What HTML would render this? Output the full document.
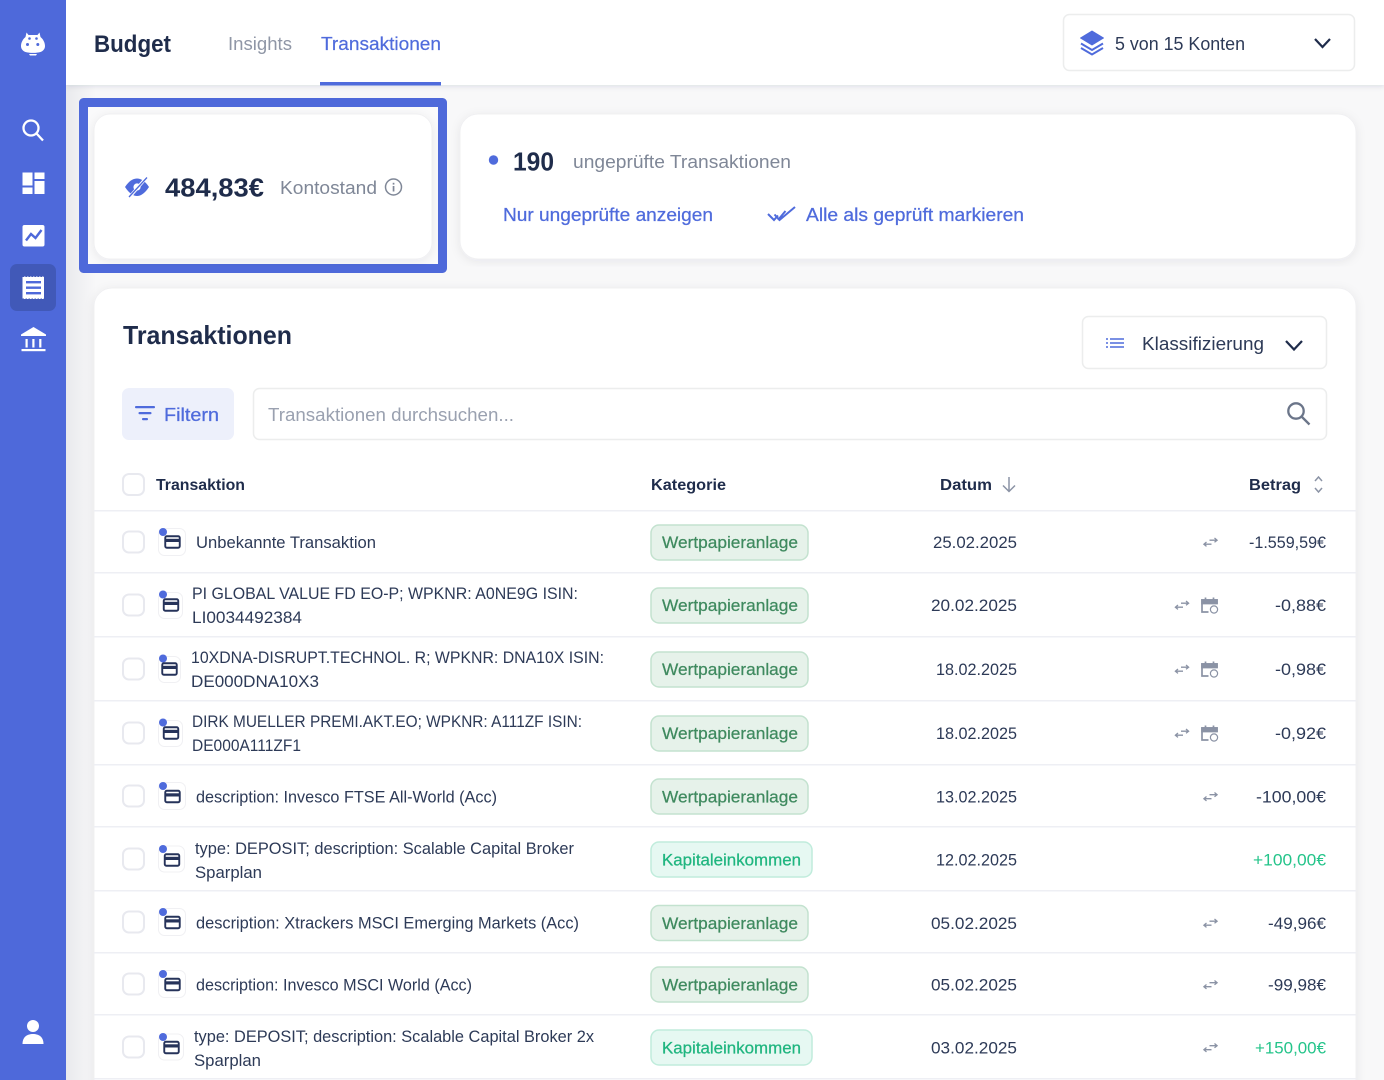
<!DOCTYPE html>
<html lang="de">
<head>
<meta charset="utf-8">
<title>Budget</title>
<style>
html,body{margin:0;padding:0;width:1384px;height:1080px;overflow:hidden;background:#f8f8f9}
svg{display:block}
text{font-family:"Liberation Sans",sans-serif;fill:#26334f;font-size:16.5px}
.m{fill:#7f8797;font-size:18px}
.b{fill:#4f6bdc;font-size:18px}
.h{font-weight:700;font-size:16px;fill:#1f2c4b}
.d{font-size:17px;fill:#2d3a57}
.w{fill:#3f8a5f;font-size:17px;stroke:#3f8a5f;stroke-width:.25}
.k{fill:#1fb57f;font-size:17px;stroke:#1fb57f;stroke-width:.25}
.g{fill:#24c48a;font-size:17px}
</style>
</head>
<body>
<svg width="1384" height="1080" viewBox="0 0 1384 1080" xmlns="http://www.w3.org/2000/svg">
<defs>
<filter id="s" x="-5%" y="-5%" width="110%" height="110%"><feDropShadow dx="0" dy="2" stdDeviation="5" flood-color="#1f2c4b" flood-opacity=".07"/></filter>
<filter id="sh" x="-2%" y="-20%" width="104%" height="140%"><feDropShadow dx="0" dy="1" stdDeviation="3" flood-color="#1f2c4b" flood-opacity=".13"/></filter>
<linearGradient id="sg" x1="0" x2="1" y1="0" y2="0"><stop offset="0" stop-color="#1f2c4b" stop-opacity=".07"/><stop offset="1" stop-color="#1f2c4b" stop-opacity="0"/></linearGradient>
<g id="card"><rect x="-7.25" y="-5.75" width="14.5" height="11.5" rx="1.6" fill="none" stroke="#26335a" stroke-width="1.9"/><rect x="-7" y="-3.2" width="14" height="3.2" fill="#26335a"/></g>
<g id="tr" fill="none" stroke="#8b93a5" stroke-width="1.3"><path d="M-1 -1.8H6.5M4 -4L6.6 -1.8L4 .3"/><path d="M1 2.2H-6.5M-4 0L-6.6 2.2L-4 4.4"/></g>
<g id="cal" fill="none" stroke="#8b93a5" stroke-width="1.7"><path d="M-1 7H-7.5V-5H7.5V-1"/><path d="M-7.5 -5H7.5V-1.5H-7.5Z" fill="#8b93a5"/><path d="M-4 -7.5V-5M4 -7.5V-5"/><circle cx="4.5" cy="4.5" r="3.6" stroke-width="1.2"/></g>
<g id="cb"><rect x="1" y="1" width="21" height="21" rx="6" fill="#fff" stroke="#e8e9ef" stroke-width="2"/></g>
<rect id="pillw" width="157" height="35" rx="8" fill="#e6f2ea" stroke="#c3e2cf" stroke-width="1.5"/>
<rect id="pillk" width="161" height="35" rx="8" fill="#e6f8f2" stroke="#c0ecdc" stroke-width="1.5"/>
</defs>

<!-- background -->
<rect width="1384" height="1080" fill="#f8f8f9"/>
<rect x="66" y="0" width="30" height="1080" fill="url(#sg)"/>

<!-- header -->
<rect x="66" y="0" width="1318" height="85" fill="#fff" filter="url(#sh)"/>
<text x="94" y="52" textLength="77" lengthAdjust="spacingAndGlyphs" style="font-size:24px;font-weight:700;fill:#1f2c4b">Budget</text>
<text x="228" y="50" class="m" textLength="64" lengthAdjust="spacingAndGlyphs" style="fill:#8f96a6">Insights</text>
<text x="321" y="50" class="b" textLength="120" lengthAdjust="spacingAndGlyphs" style="stroke:#4f6bdc;stroke-width:.2">Transaktionen</text>
<rect x="320" y="82" width="121" height="3.5" fill="#4f6bdc"/>

<rect x="1063.5" y="14.5" width="291" height="56" rx="6" fill="#fff" stroke="#eceded" stroke-width="1.5"/>
<path d="M1092 31L1103.500 38L1092 45L1080.500 38Z" fill="#4f6bdc" stroke="#4f6bdc" stroke-linejoin="round"/>
<path d="M1081 43.500L1092 50L1103 43.500M1081 48L1092 54.500L1103 48" fill="none" stroke="#4f6bdc" stroke-width="2"/>
<text x="1115" y="50" class="d" style="font-size:18px" textLength="130" lengthAdjust="spacingAndGlyphs">5 von 15 Konten</text>
<path d="M1315 39L1322.500 47L1330 39" fill="none" stroke="#1f2c4b" stroke-width="2.200"/>

<!-- sidebar -->
<rect x="0" y="0" width="66" height="1080" fill="#4e69da"/>
<path d="M26.500 32.500L28.500 35H37.500L39.500 32.500L40.500 37C43 39 45 42.500 45 46C45 49 43 51 40.500 52C37 53.200 29 53.200 25.500 52C23 51 21 49 21 46C21 42.500 23 39 25.500 37Z" fill="#fff"/>
<circle cx="29.500" cy="38.500" r="1.300" fill="#4e69da"/><circle cx="36.500" cy="38.500" r="1.300" fill="#4e69da"/>
<circle cx="27.500" cy="44.500" r="1.500" fill="#4e69da"/><circle cx="37.800" cy="44.500" r="1.500" fill="#4e69da"/>
<path d="M29 54H37L36 55.500H30Z" fill="#fff"/>
<g fill="none" stroke="#fff" stroke-width="2.300"><circle cx="31" cy="128" r="7.500"/><path d="M36.500 133.500L43 140.500"/></g>
<g fill="#fff"><rect x="22.500" y="172.500" width="10" height="13"/><rect x="22.500" y="187.500" width="10" height="6.500"/><rect x="34.500" y="172.500" width="10" height="6.500"/><rect x="34.500" y="181" width="10" height="13"/></g>
<rect x="22.500" y="225" width="22" height="21.500" rx="2" fill="#fff"/>
<path d="M26 240.500L31 234L35.500 238L41.500 230" fill="none" stroke="#4e69da" stroke-width="2.400"/>
<rect x="10" y="264" width="46" height="47" rx="7" fill="#4159b8"/>
<path d="M22.500 276.500h21.500v22.500h-21.500z" fill="#fff"/>
<path d="M22.500 276.500H44M22.500 299H44" stroke="#4159b8" stroke-width="1" stroke-dasharray="1.500 1.500"/>
<g fill="#4e69da"><rect x="26" y="281" width="15" height="2.400"/><rect x="26" y="286.500" width="15" height="2.400"/><rect x="26" y="292" width="15" height="2.400"/></g>
<path d="M33.500 327L46 334.500V336H21V334.500Z" fill="#fff"/>
<g fill="#fff"><rect x="25.500" y="339" width="2.200" height="8.500"/><rect x="32.300" y="339" width="2.200" height="8.500"/><rect x="39.200" y="339" width="2.200" height="8.500"/><rect x="21.500" y="349" width="24" height="2.200"/></g>
<circle cx="33" cy="1026" r="6" fill="#fff"/>
<path d="M22.500 1044C22.500 1037 27 1034 33 1034C39 1034 43.500 1037 43.500 1044Z" fill="#fff"/>

<!-- highlighted balance -->
<rect x="83.500" y="102.500" width="359" height="166" fill="#fafafb" stroke="#4e69da" stroke-width="9" stroke-linejoin="round"/>
<rect x="94" y="114" width="338" height="145" rx="16" fill="#fff" stroke="#f0f0f2" filter="url(#s)"/>
<path d="M125 187C129 181 133 178.500 137 178.500C141 178.500 145 181 149 187C145 193 141 196 137 196C133 196 129 193 125 187Z" fill="#4f6bdc"/>
<circle cx="137" cy="187" r="3.600" fill="#fff"/>
<path d="M130 196.500L146 178" stroke="#fff" stroke-width="3.200"/>
<path d="M129 197L147 177.500" stroke="#4f6bdc" stroke-width="1.300"/>
<text x="165" y="196.500" textLength="99" lengthAdjust="spacingAndGlyphs" style="font-size:26px;font-weight:700;fill:#1f2c4b">484,83€</text>
<text x="280" y="194" class="m" textLength="97" lengthAdjust="spacingAndGlyphs">Kontostand</text>
<circle cx="393.500" cy="187" r="8" fill="none" stroke="#7f8797" stroke-width="1.500"/>
<rect x="392.700" y="186" width="1.700" height="5.500" fill="#7f8797"/><rect x="392.700" y="182.800" width="1.700" height="1.800" fill="#7f8797"/>

<!-- unchecked card -->
<rect x="460" y="114" width="896" height="145" rx="18" fill="#fff" stroke="#f0f0f2" filter="url(#s)"/>
<circle cx="493.500" cy="160" r="4.700" fill="#4f6bdc"/>
<text x="513" y="170.500" textLength="41" lengthAdjust="spacingAndGlyphs" style="font-size:26px;font-weight:700;fill:#1f2c4b">190</text>
<text x="573" y="168" class="m" textLength="218" lengthAdjust="spacingAndGlyphs">ungeprüfte Transaktionen</text>
<text x="503" y="221" class="b" textLength="210" lengthAdjust="spacingAndGlyphs" style="stroke:#4f6bdc;stroke-width:.25">Nur ungeprüfte anzeigen</text>
<path d="M768 214L774 220L778 215.500M774.500 214.500L779.500 220L795 207M778 220L785.500 211" fill="none" stroke="#4f6bdc" stroke-width="2"/>
<text x="806" y="221" class="b" textLength="218" lengthAdjust="spacingAndGlyphs" style="stroke:#4f6bdc;stroke-width:.25">Alle als geprüft markieren</text>

<!-- table card -->
<path d="M94 1090V306A18 18 0 0 1 112 288H1338A18 18 0 0 1 1356 306V1090Z" fill="#fff" stroke="#f0f0f2" filter="url(#s)"/>
<text x="123" y="344" textLength="169" lengthAdjust="spacingAndGlyphs" style="font-size:26px;font-weight:700;fill:#1f2c4b">Transaktionen</text>

<rect x="1082.500" y="316.500" width="244" height="52" rx="6" fill="#fff" stroke="#eceded" stroke-width="1.500"/>
<g stroke="#4f6bdc" stroke-width="1.600"><path d="M1110 339H1124M1110 343H1124M1110 347H1124"/><path d="M1106 339H1108M1106 343H1108M1106 347H1108"/></g>
<text x="1142" y="350" class="d" style="font-size:18px" textLength="122" lengthAdjust="spacingAndGlyphs">Klassifizierung</text>
<path d="M1286 341L1294 349.500L1302 341" fill="none" stroke="#1f2c4b" stroke-width="2.200"/>

<rect x="122" y="388" width="112" height="52" rx="7" fill="#edf0fb"/>
<g fill="#4f6bdc"><rect x="135" y="406" width="20" height="2.300" rx="1"/><rect x="138.500" y="412" width="13" height="2.300" rx="1"/><rect x="142" y="418" width="6" height="2.300" rx="1"/></g>
<text x="164" y="421" class="b" textLength="55" lengthAdjust="spacingAndGlyphs" style="stroke:#4f6bdc;stroke-width:.25">Filtern</text>
<rect x="253.500" y="388.500" width="1073" height="51" rx="6" fill="#fff" stroke="#eceded" stroke-width="1.500"/>
<text x="268" y="421" class="m" textLength="246" lengthAdjust="spacingAndGlyphs" style="fill:#9aa1b0">Transaktionen durchsuchen...</text>
<g fill="none" stroke="#6b7589" stroke-width="2.300"><circle cx="1296" cy="411" r="7.700"/><path d="M1302 417L1309.500 424.500"/></g>

<!-- table head -->
<use href="#cb" x="122" y="473"/>
<text x="156" y="490" class="h" textLength="89" lengthAdjust="spacingAndGlyphs">Transaktion</text>
<text x="651" y="490" class="h" textLength="75" lengthAdjust="spacingAndGlyphs">Kategorie</text>
<text x="940" y="490" class="h" textLength="52" lengthAdjust="spacingAndGlyphs">Datum</text>
<path d="M1009 477V491M1003 485.500L1009 491.500L1015 485.500" fill="none" stroke="#8b93a5" stroke-width="1.500"/>
<text x="1249" y="490" class="h" textLength="52" lengthAdjust="spacingAndGlyphs">Betrag</text>
<path d="M1315 481L1318.500 477L1322 481M1315 488L1318.500 492L1322 488" fill="none" stroke="#8b93a5" stroke-width="1.500"/>

<!-- separators -->
<g fill="#eeeff4">
<rect x="94" y="510" width="1262" height="1.500"/><rect x="94" y="572" width="1262" height="1.500"/><rect x="94" y="636" width="1262" height="1.500"/><rect x="94" y="700" width="1262" height="1.500"/><rect x="94" y="764" width="1262" height="1.500"/><rect x="94" y="826" width="1262" height="1.500"/><rect x="94" y="890" width="1262" height="1.500"/><rect x="94" y="952" width="1262" height="1.500"/><rect x="94" y="1014" width="1262" height="1.500"/><rect x="94" y="1078" width="1262" height="1.500"/>
</g>

<!-- row 1 -->
<use href="#cb" x="122" y="530.500"/>
<rect x="158.500" y="528.500" width="27" height="27" rx="6" fill="#fff" stroke="#f0f0f3"/><circle cx="163" cy="532" r="4" fill="#4f6bdc"/><use href="#card" x="172.500" y="542"/>
<text x="196" y="548" class="d" textLength="180" lengthAdjust="spacingAndGlyphs">Unbekannte Transaktion</text>
<use href="#pillw" x="651" y="525"/><text x="662" y="548" class="w" textLength="136" lengthAdjust="spacingAndGlyphs">Wertpapieranlage</text>
<text x="933" y="548" class="d" textLength="84" lengthAdjust="spacingAndGlyphs">25.02.2025</text>
<use href="#tr" x="1210.500" y="542"/>
<text x="1249" y="548" class="d" textLength="77" lengthAdjust="spacingAndGlyphs">-1.559,59€</text>

<!-- row 2 -->
<use href="#cb" x="122" y="593.500"/>
<rect x="158.500" y="592.500" width="24" height="26" rx="6" fill="#fff" stroke="#f0f0f3"/><circle cx="163" cy="594.500" r="4" fill="#4f6bdc"/><use href="#card" x="171" y="605"/>
<text x="192" y="599" class="d" textLength="386" lengthAdjust="spacingAndGlyphs">PI GLOBAL VALUE FD EO-P; WPKNR: A0NE9G ISIN:</text>
<text x="192" y="623" class="d" textLength="110" lengthAdjust="spacingAndGlyphs">LI0034492384</text>
<use href="#pillw" x="651" y="588"/><text x="662" y="611" class="w" textLength="136" lengthAdjust="spacingAndGlyphs">Wertpapieranlage</text>
<text x="931" y="611" class="d" textLength="86" lengthAdjust="spacingAndGlyphs">20.02.2025</text>
<use href="#tr" x="1182" y="605"/><use href="#cal" x="1209.500" y="605"/>
<text x="1275" y="611" class="d" textLength="51" lengthAdjust="spacingAndGlyphs">-0,88€</text>

<!-- row 3 -->
<use href="#cb" x="122" y="657.500"/>
<rect x="158.500" y="656.500" width="22" height="26" rx="6" fill="#fff" stroke="#f0f0f3"/><circle cx="163" cy="658.500" r="4" fill="#4f6bdc"/><use href="#card" x="169.500" y="669"/>
<text x="191" y="663" class="d" textLength="413" lengthAdjust="spacingAndGlyphs">10XDNA-DISRUPT.TECHNOL. R; WPKNR: DNA10X ISIN:</text>
<text x="191" y="687" class="d" textLength="128" lengthAdjust="spacingAndGlyphs">DE000DNA10X3</text>
<use href="#pillw" x="651" y="652"/><text x="662" y="675" class="w" textLength="136" lengthAdjust="spacingAndGlyphs">Wertpapieranlage</text>
<text x="936" y="675" class="d" textLength="81" lengthAdjust="spacingAndGlyphs">18.02.2025</text>
<use href="#tr" x="1182" y="669"/><use href="#cal" x="1209.500" y="669"/>
<text x="1275" y="675" class="d" textLength="51" lengthAdjust="spacingAndGlyphs">-0,98€</text>

<!-- row 4 -->
<use href="#cb" x="122" y="721.500"/>
<rect x="158.500" y="720.500" width="24" height="26" rx="6" fill="#fff" stroke="#f0f0f3"/><circle cx="163" cy="722.500" r="4" fill="#4f6bdc"/><use href="#card" x="171" y="733"/>
<text x="192" y="727" class="d" textLength="390" lengthAdjust="spacingAndGlyphs">DIRK MUELLER PREMI.AKT.EO; WPKNR: A111ZF ISIN:</text>
<text x="192" y="751" class="d" textLength="109" lengthAdjust="spacingAndGlyphs">DE000A111ZF1</text>
<use href="#pillw" x="651" y="716"/><text x="662" y="739" class="w" textLength="136" lengthAdjust="spacingAndGlyphs">Wertpapieranlage</text>
<text x="936" y="739" class="d" textLength="81" lengthAdjust="spacingAndGlyphs">18.02.2025</text>
<use href="#tr" x="1182" y="733"/><use href="#cal" x="1209.500" y="733"/>
<text x="1275" y="739" class="d" textLength="51" lengthAdjust="spacingAndGlyphs">-0,92€</text>

<!-- row 5 -->
<use href="#cb" x="122" y="784.500"/>
<rect x="158.500" y="782.500" width="27" height="27" rx="6" fill="#fff" stroke="#f0f0f3"/><circle cx="163" cy="786" r="4" fill="#4f6bdc"/><use href="#card" x="172.500" y="796.500"/>
<text x="196" y="802.500" class="d" textLength="301" lengthAdjust="spacingAndGlyphs">description: Invesco FTSE All-World (Acc)</text>
<use href="#pillw" x="651" y="779"/><text x="662" y="802.500" class="w" textLength="136" lengthAdjust="spacingAndGlyphs">Wertpapieranlage</text>
<text x="936" y="802.500" class="d" textLength="81" lengthAdjust="spacingAndGlyphs">13.02.2025</text>
<use href="#tr" x="1210.500" y="796.500"/>
<text x="1256" y="802.500" class="d" textLength="70" lengthAdjust="spacingAndGlyphs">-100,00€</text>

<!-- row 6 -->
<use href="#cb" x="122" y="847.500"/>
<rect x="158.500" y="846" width="26" height="26" rx="6" fill="#fff" stroke="#f0f0f3"/><circle cx="163" cy="849" r="4" fill="#4f6bdc"/><use href="#card" x="172" y="860"/>
<text x="195" y="854" class="d" textLength="379" lengthAdjust="spacingAndGlyphs">type: DEPOSIT; description: Scalable Capital Broker</text>
<text x="195" y="878" class="d" textLength="67" lengthAdjust="spacingAndGlyphs">Sparplan</text>
<use href="#pillk" x="651" y="842"/><text x="662" y="865.500" class="k" textLength="139" lengthAdjust="spacingAndGlyphs">Kapitaleinkommen</text>
<text x="936" y="865.500" class="d" textLength="81" lengthAdjust="spacingAndGlyphs">12.02.2025</text>
<text x="1253" y="865.500" class="g" textLength="73" lengthAdjust="spacingAndGlyphs">+100,00€</text>

<!-- row 7 -->
<use href="#cb" x="122" y="910.500"/>
<rect x="158.500" y="908.500" width="27" height="27" rx="6" fill="#fff" stroke="#f0f0f3"/><circle cx="163" cy="912" r="4" fill="#4f6bdc"/><use href="#card" x="172.500" y="922.500"/>
<text x="196" y="928.500" class="d" textLength="383" lengthAdjust="spacingAndGlyphs">description: Xtrackers MSCI Emerging Markets (Acc)</text>
<use href="#pillw" x="651" y="905.500"/><text x="662" y="929" class="w" textLength="136" lengthAdjust="spacingAndGlyphs">Wertpapieranlage</text>
<text x="931" y="929" class="d" textLength="86" lengthAdjust="spacingAndGlyphs">05.02.2025</text>
<use href="#tr" x="1210.500" y="923"/>
<text x="1268" y="929" class="d" textLength="58" lengthAdjust="spacingAndGlyphs">-49,96€</text>

<!-- row 8 -->
<use href="#cb" x="122" y="972.500"/>
<rect x="158.500" y="970.500" width="27" height="27" rx="6" fill="#fff" stroke="#f0f0f3"/><circle cx="163" cy="974" r="4" fill="#4f6bdc"/><use href="#card" x="172.500" y="984.500"/>
<text x="196" y="990.500" class="d" textLength="276" lengthAdjust="spacingAndGlyphs">description: Invesco MSCI World (Acc)</text>
<use href="#pillw" x="651" y="967"/><text x="662" y="990.500" class="w" textLength="136" lengthAdjust="spacingAndGlyphs">Wertpapieranlage</text>
<text x="931" y="990.500" class="d" textLength="86" lengthAdjust="spacingAndGlyphs">05.02.2025</text>
<use href="#tr" x="1210.500" y="984.500"/>
<text x="1268" y="990.500" class="d" textLength="58" lengthAdjust="spacingAndGlyphs">-99,98€</text>

<!-- row 9 -->
<use href="#cb" x="122" y="1035.500"/>
<rect x="158.500" y="1034" width="25" height="26" rx="6" fill="#fff" stroke="#f0f0f3"/><circle cx="163" cy="1037" r="4" fill="#4f6bdc"/><use href="#card" x="171.500" y="1047.500"/>
<text x="194" y="1042" class="d" textLength="400" lengthAdjust="spacingAndGlyphs">type: DEPOSIT; description: Scalable Capital Broker 2x</text>
<text x="194" y="1066" class="d" textLength="67" lengthAdjust="spacingAndGlyphs">Sparplan</text>
<use href="#pillk" x="651" y="1030"/><text x="662" y="1053.500" class="k" textLength="139" lengthAdjust="spacingAndGlyphs">Kapitaleinkommen</text>
<text x="931" y="1053.500" class="d" textLength="86" lengthAdjust="spacingAndGlyphs">03.02.2025</text>
<use href="#tr" x="1210.500" y="1047.500"/>
<text x="1255" y="1053.500" class="g" textLength="71" lengthAdjust="spacingAndGlyphs">+150,00€</text>
</svg>
</body>
</html>
